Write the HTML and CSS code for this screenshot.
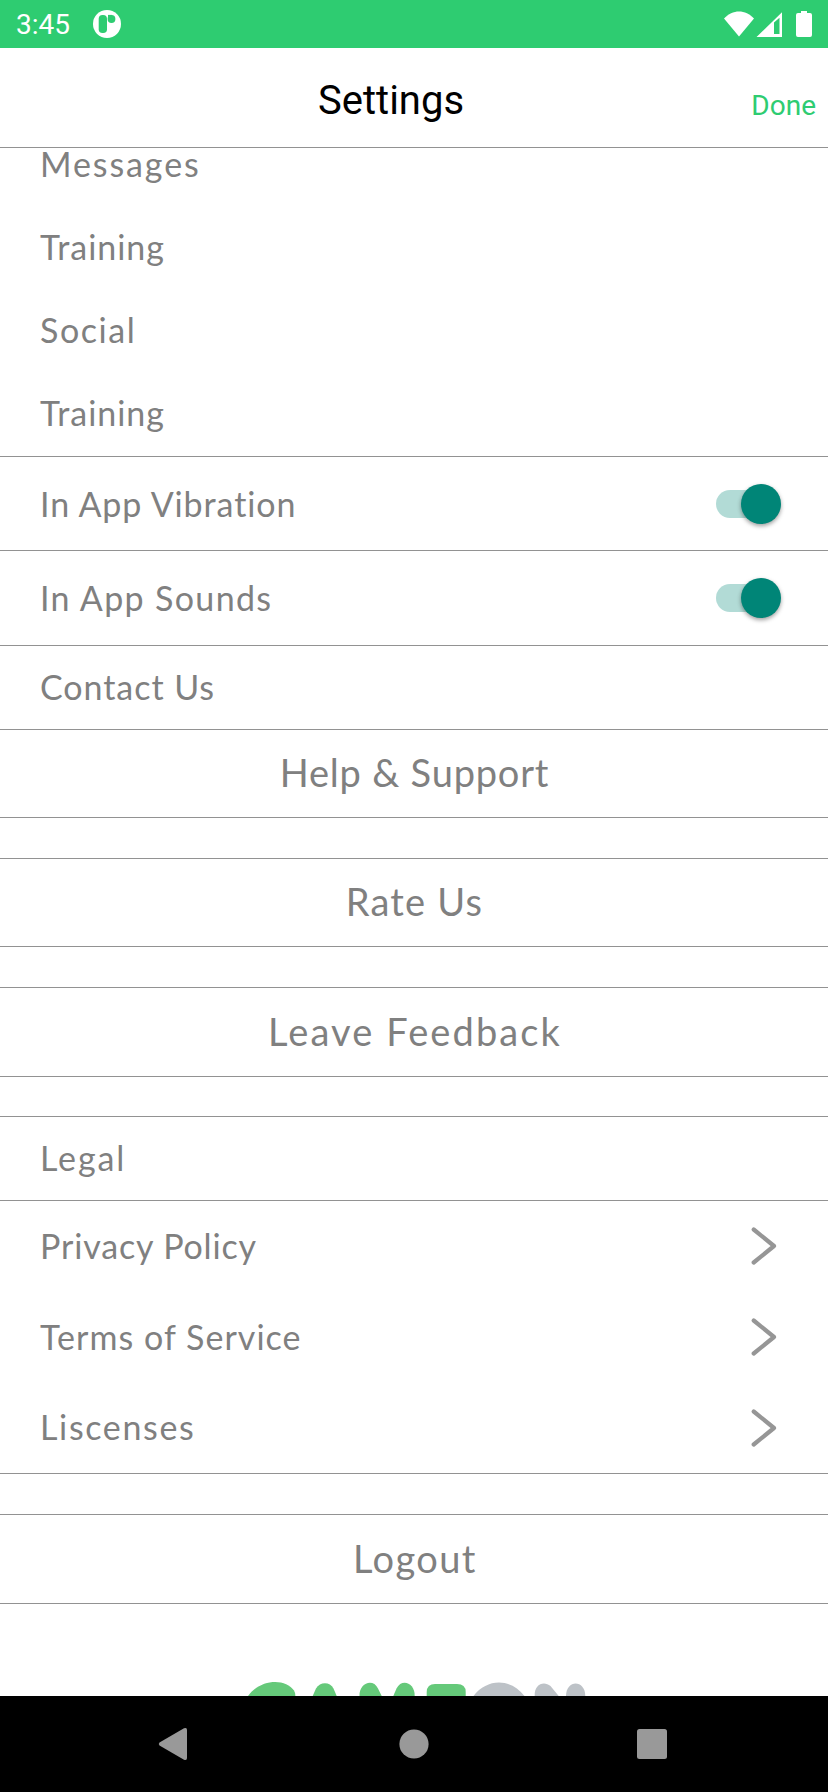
FILE: index.html
```html
<!DOCTYPE html>
<html lang="en">
<head>
<meta charset="utf-8">
<title>Settings</title>
<link rel="stylesheet" href="styles.css">
</head>
<body>
<div class="screen">
  <div class="status">
    <span class="clock">3:45</span>
    <svg class="app-icon" width="28" height="28" viewBox="0 0 28 28"><circle cx="14" cy="14" r="14" fill="#fff"/><rect x="5.7" y="5" width="8.3" height="18" rx="3.8" fill="#2ecc71"/><circle cx="18.5" cy="9" r="3.9" fill="#2ecc71"/><path d="M15 4.9h4v4h-4z" fill="#2ecc71"/></svg>
    <svg class="tray" width="90" height="28" viewBox="0 0 90 28" fill="#fff"><path d="M0 7.500C8.500-2 21.500-2 30 7.500L15 25.500z"/><path fill-rule="evenodd" d="M32.500 26L58 1.300V26zM50 11.500V23h5.500V6.700z"/><path d="M77 0h6v2h3q2 0 2 2v20q0 2-2 2H74q-2 0-2-2V4q0-2 2-2h3z"/></svg>
  </div>
  <header class="header"><h1 class="title">Settings</h1><span class="done">Done</span></header>
  <main class="content">
    <section class="group topics">
      <div class="row"><span class="messages">Messages</span></div>
      <div class="row"><span class="training">Training</span></div>
      <div class="row"><span class="social">Social</span></div>
      <div class="row"><span class="training">Training</span></div>
    </section>
    <div class="row switch-row"><span class="vibration">In App Vibration</span><span class="switch"><span class="thumb"></span></span></div>
    <div class="row switch-row tall"><span class="sounds">In App Sounds</span><span class="switch"><span class="thumb"></span></span></div>
    <div class="row heading"><span class="contact">Contact Us</span></div>
    <div class="button first"><span class="help">Help &amp; Support</span></div>
    <div class="button"><span class="rate">Rate Us</span></div>
    <div class="button tall feedback-row"><span class="feedback">Leave Feedback</span></div>
    <div class="row heading legal-row"><span class="legal">Legal</span></div>
    <section class="group links">
      <div class="row"><span class="privacy">Privacy Policy</span><svg class="chevron" width="26" height="38" viewBox="0 0 26 38"><path d="M2.700 2.500L23 19L2.700 35.500"/></svg></div>
      <div class="row"><span class="terms">Terms of Service</span><svg class="chevron" width="26" height="38" viewBox="0 0 26 38"><path d="M2.700 2.500L23 19L2.700 35.500"/></svg></div>
      <div class="row"><span class="licenses">Liscenses</span><svg class="chevron" width="26" height="38" viewBox="0 0 26 38"><path d="M2.700 2.500L23 19L2.700 35.500"/></svg></div>
    </section>
    <div class="button tall"><span class="logout">Logout</span></div>
    <svg class="logo" width="360" height="24" viewBox="0 0 360 24">
      <g fill="#65c97a"><path d="M7 24C20 6 45 6.500 53 18.500Q54.500 21 54.300 24z"/><path d="M71.700 24L75 16.500C79 9.500 89 9.500 92.500 16.500L95.700 24z"/><path d="M118.500 24C118 11 132 6 137 16.500L140.700 24z"/><path d="M152.300 24L155.500 16.500C161 6 174 11 173.700 24z"/><path d="M185.700 24V20Q186 12 194 12H216Q224.700 12 224.700 20V24z"/></g>
      <g fill="#bdc2c7"><path d="M232.500 24C246 6 270 6 283.500 24z"/><path d="M293.700 24C293 12 303 8.500 309.500 14L317.700 24z"/><path d="M325 24C325 7.200 344.300 7.200 344.300 24z"/></g>
    </svg>
  </main>
  <nav class="nav">
    <svg width="828" height="96" viewBox="0 0 828 96" fill="#999"><path d="M159.500 46.500L184 32.300Q187 31 187 34V62Q187 65 184 63.700L159.500 49.500Q158 48 159.500 46.500z"/><circle cx="414" cy="48" r="14.600"/><rect x="637" y="33" width="30" height="30" rx="2.500"/></svg>
  </nav>
</div>
</body>
</html>
```
FILE: styles.css
```css
* { box-sizing: border-box; }
body { margin: 0; background: #fff; }
.screen { width: 828px; height: 1792px; display: flex; flex-direction: column; font-family: Lato, sans-serif; color: #808080; }
.status { height: 48px; flex: none; background: #2ecc71; color: #fff; display: flex; padding: 0 14px 0 16px; font: 28px/50px Roboto, sans-serif; }
.app-icon { margin: 10px 0 0 23px; }
.tray { margin: 11px 0 0 auto; }
.header { height: 100px; flex: none; border-bottom: 1px solid #929292; display: flex; justify-content: space-between; padding: 0 12px 0 318px; font-family: Roboto, sans-serif; }
.title { margin: 0; color: #000; font-size: 40px; font-weight: 400; line-height: 105px; }
.done { color: #2ecc71; font-size: 28px; line-height: 115px; }
.content { flex: 1; min-height: 0; font-size: 34px; line-height: 32px; }
.group { border-bottom: 1px solid #929292; }
.row { display: flex; align-items: center; height: 83px; padding: 0 40px; white-space: nowrap; }
.topics { padding-bottom: 1px; }
.topics .row { padding-bottom: 1px; }
.topics .row:first-child { height: 58px; padding-bottom: 26px; }
.switch-row { height: 94px; border-bottom: 1px solid #929292; justify-content: space-between; padding-right: 47px; }
.switch-row.tall { height: 95px; padding-bottom: 1px; }
.switch { width: 65px; height: 28px; border-radius: 14px; background: linear-gradient(90deg, #b2dbd6 50px, transparent 50px); display: flex; align-items: center; justify-content: flex-end; }
.thumb { width: 40px; height: 40px; border-radius: 50%; background: #008577; box-shadow: 0 2px 4px rgba(0,0,0,.38); }
.heading { height: 84px; padding-bottom: 2px; border-bottom: 1px solid #929292; }
.button { height: 89px; margin-bottom: 40px; border: solid #929292; border-width: 1px 0; display: flex; align-items: center; justify-content: center; font-size: 38px; padding-bottom: 3px; }
.button.first { height: 88px; border-top: 0; }
.button.tall { height: 90px; }
.feedback-row { margin-bottom: 39px; }
.legal-row { height: 85px; border-top: 1px solid #929292; }
.links { margin-bottom: 40px; }
.links .row { height: 91px; justify-content: space-between; padding-right: 51px; }
.links .row:last-child { height: 90px; }
.links span { padding-bottom: 2px; }
.chevron { fill: none; stroke: #969696; stroke-width: 4.200; stroke-linecap: round; stroke-linejoin: round; margin-bottom: 1px; }
.logo { display: block; margin: 68px 0 0 241px; }
.nav { height: 96px; flex: none; background: #000; }
.nav svg { display: block; }

/* Optical tracking per label */
.messages { letter-spacing: 1.9px; }
.training { letter-spacing: .95px; }
.social { letter-spacing: 1.55px; }
.vibration { letter-spacing: .9px; }
.sounds { letter-spacing: 1.35px; }
.contact { letter-spacing: .95px; }
.help { letter-spacing: .8px; margin-left: 1px; }
.rate { letter-spacing: 1.2px; margin-left: 1px; }
.feedback { letter-spacing: 2.1px; margin-left: 2px; }
.legal { letter-spacing: 1.9px; }
.privacy { letter-spacing: .85px; }
.terms { letter-spacing: 1.05px; }
.licenses { letter-spacing: 1.65px; }
.logout { letter-spacing: 1.4px; margin-left: 2px; }
```
